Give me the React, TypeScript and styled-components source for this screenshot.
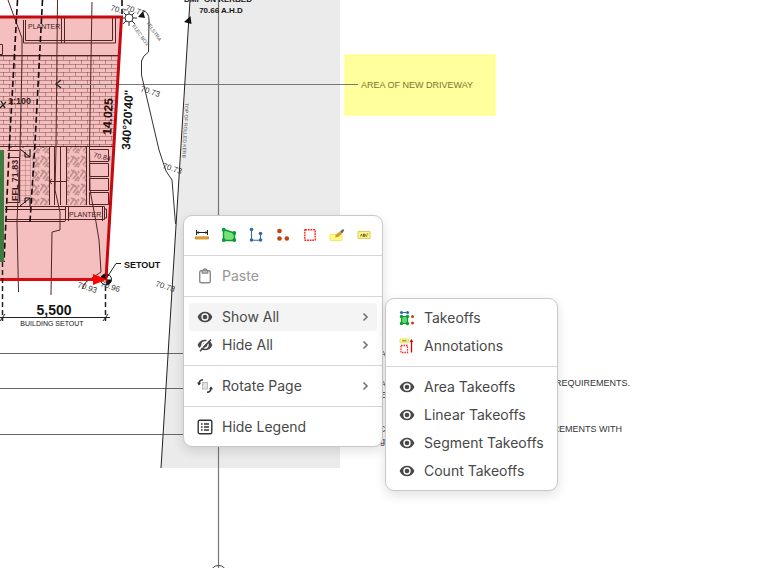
import React from "react";
import styled, { createGlobalStyle } from "styled-components";

const GlobalStyle = createGlobalStyle`
  * { box-sizing: border-box; }
  body { margin: 0; background: #fff; font-family: Inter, "Liberation Sans", sans-serif; }
`;

const Workspace = styled.main`
  position: relative;
  min-height: 100vh;
  overflow: hidden;
`;

const Sheet = styled.svg`
  display: block;
  width: 100%;
  height: 100vh;
  font-family: "Liberation Sans", sans-serif;
`;

const Menu = styled.div`
  position: absolute;
  padding: 5px;
  background: #fff;
  border: 1px solid #c8c8c8;
  border-radius: 9px;
  box-shadow: 0 4px 12px rgba(0, 0, 0, 0.12);
`;

const ContextMenu = styled(Menu)`
  left: 183px;
  top: 215px;
  width: 200px;
`;

const Submenu = styled(Menu)`
  left: calc(100% + 8px);
  top: -5px;
  width: 173px;
`;

const Anchor = styled.div`
  position: relative;
`;

const Divider = styled.hr`
  height: 1px;
  margin: 6px -5px;
  border: 0;
  background: #d6d6d6;
`;

const ToolRow = styled.div`
  display: flex;
  justify-content: space-between;
  height: 28px;
`;

const ToolButton = styled.button`
  display: grid;
  place-items: center;
  width: 26px;
  padding: 0;
  border: 0;
  background: none;
`;

const Item = styled.button<{ $active?: boolean }>`
  display: flex;
  align-items: center;
  gap: 9px;
  width: 100%;
  height: 28px;
  padding: 0 4px 0 8px;
  border: 0;
  border-radius: 4px;
  background: ${(p) => (p.$active ? "#f4f4f4" : "transparent")};
  color: #484848;
  font: 400 14px/20px Inter, "Liberation Sans", sans-serif;
  text-align: left;
  white-space: nowrap;
  &:disabled { color: #969696; }
`;

const Label = styled.span`
  flex: 1;
`;

const Icon = styled.svg`
  flex: none;
  width: 16px;
  height: 16px;
`;

const Eye = () => (
  <Icon viewBox="0 0 16 16">
    <path fillRule="evenodd" fill="#484848" d="M8 2.7C4.7 2.7 1.9 4.7.6 8c1.3 3.3 4.1 5.300 7.400 5.300s6.100-2 7.400-5.300C14.100 4.700 11.300 2.700 8 2.700Zm0 1.600a3.700 3.700 0 1 1 0 7.400 3.700 3.700 0 0 1 0-7.400Z" />
    <circle cx="8" cy="8" r="2.3" fill="#484848" />
  </Icon>
);

const EyeOff = () => (
  <Icon viewBox="0 0 16 16">
    <path fillRule="evenodd" fill="#484848" d="M8 2.7C4.7 2.7 1.9 4.7.6 8c1.3 3.3 4.1 5.300 7.400 5.300s6.100-2 7.400-5.300C14.100 4.700 11.300 2.700 8 2.700Zm0 1.600a3.700 3.700 0 1 1 0 7.400 3.700 3.700 0 0 1 0-7.400Z" />
    <circle cx="8" cy="8" r="2.3" fill="#484848" />
    <path d="M1.500 13.200 12.800 1.500" stroke="#fff" strokeWidth="1.8" />
    <path d="M3 14.200 14 2.600" stroke="#484848" strokeWidth="1.6" />
  </Icon>
);

const Clipboard = () => (
  <Icon viewBox="0 0 16 16" fill="none" stroke="#8a8a8a" strokeWidth="1.4">
    <rect x="2.700" y="2.700" width="10.600" height="12" rx="1.500" />
    <path d="M5.300 3V5h5.400V3M6 3a2 2 0 0 1 4 0" />
  </Icon>
);

const RotateIcon = () => (
  <Icon viewBox="0 0 16 16" fill="none" stroke="#333" strokeWidth="1.5">
    <rect x="5.500" y="4.500" width="5" height="6.500" fill="#e2e2e2" stroke="#bbb" strokeWidth="1" />
    <path d="M2 6.500C1.800 3.500 3.300 1.800 6 1.700M14 9.500c.2 3-1.300 4.700-4 4.800" />
    <path d="M0 4.500 2 7.500 4.200 4.800M12 11.200l2-2.700 2 2.700" fill="#333" stroke="none" />
  </Icon>
);

const LegendIcon = () => (
  <Icon viewBox="0 0 16 16" fill="none" stroke="#333" strokeWidth="1.4">
    <rect x="1.200" y="1.200" width="13.600" height="13.600" rx="1.500" />
    <path d="M4 5h1.600M4 8h1.600M4 11h1.600M7 5h5M7 8h5M7 11h5" />
  </Icon>
);

const Chevron = () => (
  <Icon viewBox="0 0 16 16" fill="none" stroke="#777" strokeWidth="1.7">
    <path d="m6.500 4.500 3.500 3.500-3.500 3.500" />
  </Icon>
);

const TakeoffsIcon = () => (
  <Icon viewBox="0 0 16 16">
    <path d="M2.500 2.500h6" stroke="#2f6da3" />
    <g fill="#2f6da3"><circle cx="2.500" cy="2.500" r="1.600" /><circle cx="8.500" cy="2.500" r="1.600" /></g>
    <path d="M2.500 6.500h6v7h-6z" fill="#5fdb65" stroke="#0b9a3a" strokeWidth="1.200" />
    <g fill="#0b9a3a"><circle cx="2.500" cy="6.500" r="1.700" /><circle cx="8.500" cy="6.500" r="1.700" /><circle cx="2.500" cy="13.500" r="1.700" /><circle cx="8.500" cy="13.500" r="1.700" /></g>
    <g fill="#c4400c"><circle cx="13.500" cy="6.500" r="1.500" /><circle cx="13.500" cy="13" r="1.500" /></g>
  </Icon>
);

const AnnotationsIcon = () => (
  <Icon viewBox="0 0 16 16" fill="none">
    <path d="M1 .8h8.500v4H1z" fill="#fff68a" stroke="#e5da59" strokeWidth=".8" />
    <path d="M3 2.800h4.500" stroke="#77743e" />
    <path d="M2 7.500h6.500v7H2z" stroke="#f22" strokeWidth="1.300" strokeDasharray="1.500 1" />
    <path d="M12.500 14.500V2" stroke="#e00000" strokeWidth="1.300" />
    <path d="m10.700 4 1.800-3 1.800 3z" fill="#e00000" />
  </Icon>
);

const tools: { name: string; icon: React.ReactNode }[] = [
  { name: "Measure", icon: (
    <Icon viewBox="0 0 16 16"><path d="M2.500 3v5M13.500 3v5M3 5.500h10" stroke="#222" fill="none" /><path d="M4.500 4 2.500 5.500 4.500 7M11.500 4l2 1.500L11.500 7" fill="#222" /><path d="M1.500 9.800h13v2.200h-13z" fill="#eda823" stroke="#b77a1b" strokeWidth=".7" /></Icon>) },
  { name: "Area", icon: (
    <Icon viewBox="0 0 16 16"><path d="M2.500 2.500 13.500 6v7.500h-11z" fill="#74e477" stroke="#0b9a3a" strokeWidth="1.400" /><g fill="#0b9a3a"><circle cx="2.700" cy="2.700" r="1.900" /><circle cx="13.300" cy="6" r="1.900" /><circle cx="2.700" cy="13" r="1.900" /><circle cx="13.300" cy="13" r="1.900" /></g></Icon>) },
  { name: "Segment", icon: (
    <Icon viewBox="0 0 16 16"><path d="M3.500 2.500V13.300h9V6" fill="none" stroke="#2f6da3" strokeWidth="1.100" /><g fill="#2f6da3"><circle cx="3.500" cy="2.500" r="1.800" /><circle cx="12.500" cy="6.500" r="1.800" /><circle cx="3.500" cy="13" r="1.800" /><circle cx="12.500" cy="13" r="1.800" /></g></Icon>) },
  { name: "Count", icon: (
    <Icon viewBox="0 0 16 16" fill="#c4400c"><circle cx="4.500" cy="4" r="2.300" /><circle cx="4.500" cy="11.500" r="2.300" /><circle cx="11.800" cy="11.500" r="2.300" /></Icon>) },
  { name: "Rectangle", icon: (
    <Icon viewBox="0 0 16 16"><rect x="2.800" y="2.800" width="10.400" height="10.400" rx=".5" fill="none" stroke="#f22" strokeWidth="1.400" strokeDasharray="1.800 .8" /></Icon>) },
  { name: "Highlight", icon: (
    <Icon viewBox="0 0 16 16"><path d="M1 7.500h12v6H1z" fill="#fffa8a" stroke="#eee34c" strokeWidth=".8" /><path d="m6 10.500 1-3 4-3 2 2-3.500 3.300Z" fill="#d49b26" /><path d="m11 4.500 3-2.500 1.300 1.300L13 6.500Z" fill="#6c6552" /></Icon>) },
  { name: "Text", icon: (
    <Icon viewBox="0 0 16 16"><path d="M2 4.500h12v7H2z" fill="#fff68a" stroke="#d9ca4c" strokeWidth=".9" /><path d="m4.500 9.500 1-2.500 1 2.500m1-2.500v2.500h1.200V7zm3.300 0h1.500M9.800 7.200v2h1.500" fill="none" stroke="#57542c" strokeWidth=".8" /></Icon>) },
];

const Plan = () => (
  <Sheet role="img" aria-label="Site plan">
    <defs>
      <pattern id="brick" width="12" height="8" patternUnits="userSpaceOnUse">
        <path d="M0 .5h12M0 4.500h12M3.500 0v4M9.500 4v4" stroke="#4b2020" strokeWidth=".8" opacity=".45" fill="none" />
      </pattern>
      <pattern id="gravel" width="10" height="14" patternUnits="userSpaceOnUse">
        <path d="m0 9 4-6 3 3-4 5M5 13l3-4 2 2M1 2l2 1M7 12l2 1M8 3l1 2" stroke="#8a6060" strokeWidth="1.800" opacity=".5" fill="none" />
      </pattern>
      <pattern id="grid" width="5" height="5" patternUnits="userSpaceOnUse">
        <path d="M0 .5h5M.5 0v5" stroke="#633" strokeWidth=".5" opacity=".5" />
      </pattern>
    </defs>

    <path d="M190 0H340V468H161Z" fill="#ebebeb" />
    <rect x="345" y="55" width="150" height="60" fill="#ffff9c" stroke="#ffff70" />

    <path d="M0 17H121.500L106 280H0Z" fill="#f5bfbf" />
    <path d="M0 55H119L114 147H0Z" fill="url(#brick)" />
    <path d="M32 147h17v58H32zM67 147h20v58H67z" fill="url(#gravel)" />
    <path d="M20 150h11v55H20z" fill="url(#grid)" />

    <g fill="none" stroke="#512424" strokeWidth="1">
      <path d="M23.500 20v23H115.500V18M25.500 20v20.500H112.500V18M61.500 18v25M64.500 18v25M0 55.500H118M0 146.500H113M0 44.500h2.500v10H0" />
      <path d="M49.500 147v58M54.500 147v58M60.500 147v58M66.500 147v58M86.500 147v58M50 181.500h17M52 179l-3 2.500 3 2.500" />
      <path d="M89.500 149.500h19v12h-19zM89.500 163.500h19v13h-19zM89.500 178.500h19v12h-19zM89.500 192.500h19v12h-19z" />
      <path d="M5 206.500h99.500v13H5M5 209.500h60M5 221.500h60M65.500 206v15M68.500 206v15M102.500 206v15M104.500 209h2v9h-2" />
      <path d="M7.500 150.500h12M7.500 157.500h12v45h-12M11 148v-2M23 148v-2M35 148v-2M43 148v-2" />
      <path d="M20 149l10 8M30 149v8h-5v-5M20 206l10-8M30 206v-8h-5v5" stroke="#111" />
      <path d="M8 0 22 38V60L20 150 17 222 18.500 292" />
      <path d="M57.500 0 56 147 55 190 60 212V230L52 232 51 295" />
      <path d="M92 2 89.500 147 90 190 96 222 99 240 101 272 86 282 82 289" />
    </g>
    <g fill="none" stroke="#190a0a" strokeWidth="1.600" strokeDasharray="6 3">
      <path d="M17.500 0 9.500 143 4 262M42.500 0 35 143 30 222M122 0V14" />
    </g>

    <g fill="none" stroke="#444">
      <path d="M57 84.500H358M218.500 0V568" stroke="#777" strokeWidth="1.200" />
      <path d="M0 353.500H183M0 388.500H183M0 434.500H183" stroke="#666" />
      <circle cx="218.500" cy="574" r="8.500" />
      <path d="M190 0 161 468" stroke="#222" />
      <path d="M143 11q6 1 6 9l-.5 32q-6 4-7 9v14l17.500 75 7 21 6 9 3.500 44" stroke="#333" />
      <path d="m61 80-5 4 5 4M0 108l6-6M1 101l4 7" stroke="#222" strokeWidth="1.300" />
      <g stroke="#333"><circle cx="129" cy="18" r="4" /><path d="M129 11v3M129 22v4M122 18h3M133 18h4M124 13l2 2M132 21l3 3M134 13l-2 2M126 21l-3 3" /></g>
    </g>
    <path d="m138 17 5-6 2 7zM184 22l7.500 2-1-8z" fill="#111" />

    <path d="M2 150V262" stroke="#3f7a3e" strokeWidth="4" />
    <path d="M0 17H121.500L106 279.500" fill="none" stroke="#c20a10" strokeWidth="3" />
    <path d="M0 279.500H96" stroke="#dd0a10" strokeWidth="3" />
    <circle cx="106" cy="279.500" r="5.500" fill="#fff" stroke="#111" />
    <path d="M106 279.500V274a5.500 5.500 0 0 0-5.500 5.500zM106 279.500v5.500a5.500 5.500 0 0 0 5.500-5.500zM106 279.500V274a5.500 5.500 0 0 1 3 1z" fill="#111" />
    <path d="m93 274 14 5.500-14 5.500z" fill="#f00" />
    <path d="M106.500 270v12" stroke="#c20a10" strokeWidth="2" />

    <g fill="none" stroke="#222">
      <path d="M2.500 262V321M105.500 286v35" strokeWidth="1.500" strokeDasharray="5 3" />
      <path d="M0 317.500H110M0 321l5-7M103 321l5-7M108 276l8-12.500h5" />
    </g>

    <g fill="#421b1b" fontSize="7">
      <text x="28" y="29">PLANTER</text>
      <text x="69" y="217">PLANTER</text>
      <text transform="translate(93 157) rotate(14)">70.84</text>
    </g>
    <g fill="#151515" fontWeight="bold">
      <text x="8" y="104" fontSize="9" fill="#421b1b">1:100</text>
      <text transform="translate(111 135) rotate(-87)" fontSize="12" fill="#250a0a">14.025</text>
      <text transform="translate(130 150) rotate(-87)" fontSize="12">340°20'40"</text>
      <text transform="translate(18 201) rotate(-90)" fontSize="9" fill="#421b1b">FFL 71.83</text>
      <text x="54" y="315" fontSize="14" textAnchor="middle">5,500</text>
      <text x="124" y="268" fontSize="9">SETOUT</text>
      <text x="218" y="2" fontSize="8" textAnchor="middle">DMP ON KERBED</text>
      <text x="221" y="13" fontSize="8" textAnchor="middle">70.66 A.H.D</text>
    </g>
    <text x="52" y="326" fontSize="7" textAnchor="middle" fill="#111">BUILDING SETOUT</text>
    <g fill="#333" fontSize="8">
      <text transform="translate(140 91) rotate(18)">70.73</text>
      <text transform="translate(162 168) rotate(18)">70.73</text>
      <text transform="translate(155 286) rotate(18)">70.78</text>
      <text transform="translate(77 287) rotate(18)">70.93</text>
      <text transform="translate(100 286) rotate(18)">70.96</text>
      <text transform="translate(110 10) rotate(18)">70.7</text>
      <text transform="translate(125 10) rotate(18)">70.77</text>
    </g>
    <g fill="#555" fontSize="5">
      <text transform="translate(132 26) rotate(55)">ELEC BOX</text>
      <text transform="translate(146 23) rotate(55)">TELSTRA</text>
      <text transform="translate(185 103) rotate(93)">TOP OF ROLLED KERB</text>
    </g>
    <g fontSize="9" fill="#333">
      <text x="361" y="88" fill="#77752f">AREA OF NEW DRIVEWAY</text>
      <text x="630" y="386" textAnchor="end">REQUIREMENTS.</text>
      <text x="622" y="432" textAnchor="end">REMENTS WITH</text>
      <text x="380" y="357">A</text>
      <text x="380" y="387">A</text>
      <text x="380" y="398">E</text>
      <text x="379" y="432">C</text>
      <text x="380" y="444">g</text>
    </g>
  </Sheet>
);

const takeoffs = ["Area Takeoffs", "Linear Takeoffs", "Segment Takeoffs", "Count Takeoffs"];

export default function App() {
  return (
    <Workspace>
      <GlobalStyle />
      <Plan />
      <ContextMenu role="menu" aria-label="Page actions">
        <ToolRow>
          {tools.map((tool) => (
            <ToolButton key={tool.name} aria-label={tool.name}>{tool.icon}</ToolButton>
          ))}
        </ToolRow>
        <Divider />
        <Item role="menuitem" disabled><Clipboard /><Label>Paste</Label></Item>
        <Divider />
        <Anchor>
          <Item role="menuitem" aria-haspopup="menu" aria-expanded="true" $active><Eye /><Label>Show All</Label><Chevron /></Item>
          <Submenu role="menu" aria-label="Show All">
            <Item role="menuitem"><TakeoffsIcon /><Label>Takeoffs</Label></Item>
            <Item role="menuitem"><AnnotationsIcon /><Label>Annotations</Label></Item>
            <Divider />
            {takeoffs.map((name) => (
              <Item key={name} role="menuitem"><Eye /><Label>{name}</Label></Item>
            ))}
          </Submenu>
        </Anchor>
        <Item role="menuitem" aria-haspopup="menu"><EyeOff /><Label>Hide All</Label><Chevron /></Item>
        <Divider />
        <Item role="menuitem" aria-haspopup="menu"><RotateIcon /><Label>Rotate Page</Label><Chevron /></Item>
        <Divider />
        <Item role="menuitem"><LegendIcon /><Label>Hide Legend</Label></Item>
      </ContextMenu>
    </Workspace>
  );
}
